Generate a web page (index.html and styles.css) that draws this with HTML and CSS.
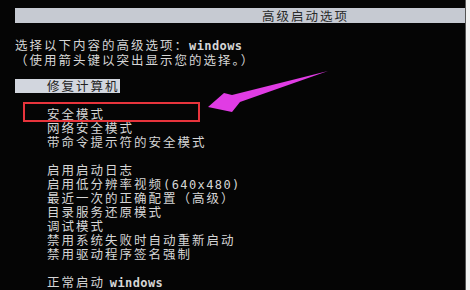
FILE: index.html
```html
<!DOCTYPE html>
<html lang="zh-CN">
<head>
    <meta charset="UTF-8">
    <meta name="viewport" content="width=device-width, initial-scale=1.0">
    <title>高级启动选项</title>
    <link rel="stylesheet" href="styles.css">
</head>
<body>
    <div class="screen">
        <div class="title-bar">高级启动选项</div>

        <div class="prompt">
            <div class="line">选择以下内容的高级选项：<span class="latin">windows</span></div>
            <div class="line">（使用箭头键以突出显示您的选择。）</div>
        </div>

        <div class="repair">修复计算机</div>

        <div class="menu">
            <div class="group">
                <div class="line">安全模式</div>
                <div class="line">网络安全模式</div>
                <div class="line">带命令提示符的安全模式</div>
            </div>
            <div class="group">
                <div class="line">启用启动日志</div>
                <div class="line">启用低分辨率视频<span class="latin wide">(640x480)</span></div>
                <div class="line">最近一次的正确配置（高级）</div>
                <div class="line">目录服务还原模式</div>
                <div class="line">调试模式</div>
                <div class="line">禁用系统失败时自动重新启动</div>
                <div class="line">禁用驱动程序签名强制</div>
            </div>
            <div class="group">
                <div class="line">正常启动 <span class="latin">windows</span></div>
            </div>
        </div>

        <!-- annotation overlay -->
        <div class="highlight-box"></div>
        <svg class="pointer" width="470" height="290" viewBox="0 0 470 290">
            <polygon points="208,107 224,93 232,95 328,71 240,102 232,112" fill="#e03ce4"/>
        </svg>
    </div>
    <div class="edge"></div>
</body>
</html>
```

FILE: styles.css
```css
/* Boot screen */
body {
    margin: 0;
    padding: 0;
    display: flex;
    width: 470px;
    height: 290px;
    overflow: hidden;
    background: #050505;
    font-family: 'Noto Sans CJK SC', 'Noto Sans', sans-serif;
    color: #d6d6d6;
}

.screen {
    position: relative;
    flex: 1;
    display: flex;
    flex-direction: column;
    padding: 8px 0 0 15px;
    font-size: 12.5px;
    letter-spacing: 2px;
}

.edge {
    width: 4px;
    background: #f2f2f2;
    border-left: 1px solid #555;
}

.title-bar {
    height: 15px;
    line-height: 15px;
    padding-left: 247px;
    background: #c6cad2;
    color: #2a2a2a;
}

.prompt {
    margin-top: 14px;
}

.prompt .line {
    height: 15px;
    line-height: 15px;
}

.line {
    height: 14px;
    line-height: 14px;
    white-space: nowrap;
}

.latin {
    font-family: 'DejaVu Sans Mono', monospace;
    font-weight: bold;
    font-size: 12px;
    letter-spacing: 0.4px;
}

.latin.wide {
    letter-spacing: 1.4px;
    font-weight: normal;
}

.repair {
    margin-top: 12px;
    width: 73px;
    height: 14px;
    line-height: 14px;
    padding-left: 32px;
    background: #d2d6de;
    color: #222;
}

.menu {
    margin-top: 14px;
    padding-left: 32px;
    display: flex;
    flex-direction: column;
    gap: 14px;
}

.highlight-box {
    position: absolute;
    left: 23px;
    top: 102px;
    width: 173px;
    height: 16px;
    border: 2px solid #e8343c;
}

.pointer {
    position: absolute;
    left: 0;
    top: 0;
}
```
